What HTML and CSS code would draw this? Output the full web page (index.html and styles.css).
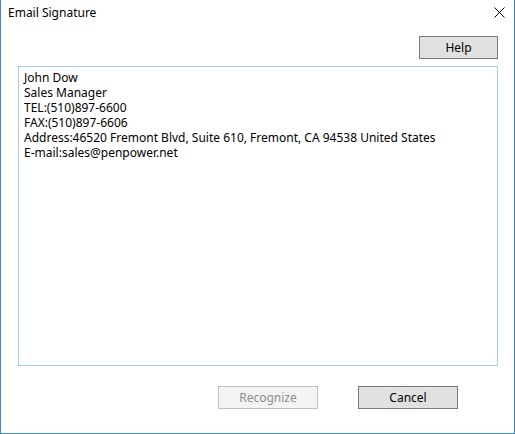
FILE: index.html
```html
<!DOCTYPE html>
<html>
<head>
<meta charset="utf-8">
<link rel="stylesheet" href="styles.css">
</head>
<body>
<div class="window">
  <div class="titlebar">
    <span class="title">Email Signature</span>
    <span class="close" aria-label="Close">
      <svg width="11" height="11" viewBox="0 0 11 11"><path d="M0.5 0.5L10.5 10.5M10.5 0.5L0.5 10.5" stroke="#000" stroke-width="1" fill="none"/></svg>
    </span>
  </div>
  <div class="content">
    <div class="help-row">
      <button class="btn">Help</button>
    </div>
    <div class="signature">
      <div>John Dow</div>
      <div>Sales Manager</div>
      <div>TEL:(510)897-6600</div>
      <div>FAX:(510)897-6606</div>
      <div>Address:46520 Fremont Blvd, Suite 610, Fremont, CA 94538 United States</div>
      <div>E-mail:sales@penpower.net</div>
    </div>
    <div class="actions">
      <button class="btn btn-disabled" disabled>Recognize</button>
      <button class="btn btn-wide">Cancel</button>
    </div>
  </div>
</div>
</body>
</html>
```

FILE: styles.css
```css
* { box-sizing: border-box; }
html, body {
  margin: 0;
  padding: 0;
  background: #ffffff;
}
body {
  font-family: "Noto Sans", "Open Sans", sans-serif;
  font-size: 12px;
  color: #000;
}
.window {
  width: 515px;
  height: 434px;
  border: 1px solid #3d88bd;
  border-top: none;
  background: #fff;
  display: flex;
  flex-direction: column;
}
.titlebar {
  height: 30px;
  display: flex;
  align-items: flex-start;
  justify-content: space-between;
  padding: 5px 9px 0 7px;
}
.title {
  font-size: 12px;
  line-height: 16px;
  color: #000;
}
.close {
  display: flex;
  width: 11px;
  height: 11px;
  margin-top: 2px;
}
.content {
  padding: 6px 16px 0 17px;
  display: flex;
  flex-direction: column;
}
.help-row {
  display: flex;
  justify-content: flex-end;
  height: 23px;
}
.btn {
  font-family: inherit;
  font-size: 12px;
  color: #000;
  background: #e1e1e1;
  border: 1px solid #7a7a7a;
  height: 23px;
  width: 79px;
  padding: 0;
  margin: 0;
  line-height: 20px;
  border-radius: 0;
}
.btn-wide { width: 100px; }
.btn-disabled {
  width: 100px;
  background: #f4f4f4;
  border-color: #bfbfbf;
  color: #8c8c8c;
}
.signature {
  margin-top: 7px;
  height: 300px;
  border: 1px solid #a5cbee;
  padding: 3px 5px;
  line-height: 15px;
  white-space: nowrap;
}
.actions {
  margin-top: 20px;
  display: flex;
  justify-content: flex-end;
  gap: 40px;
  padding-right: 40px;
}
```
